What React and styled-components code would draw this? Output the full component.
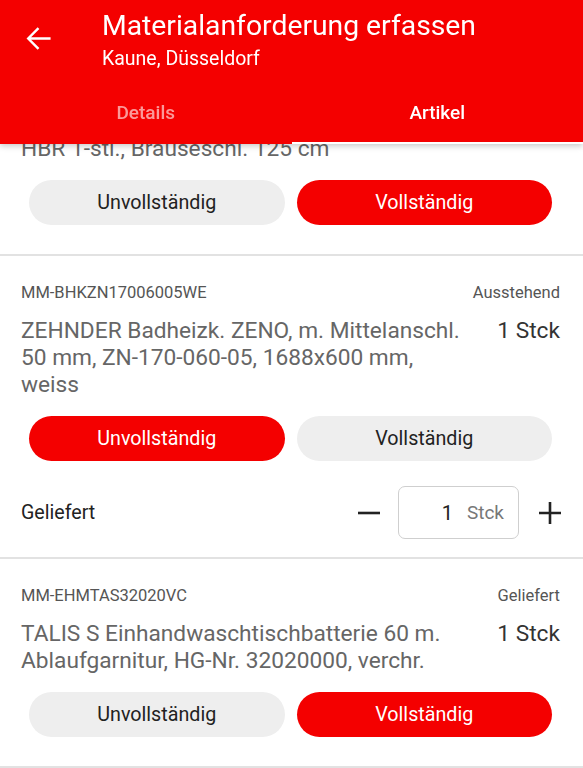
import React, { useState } from "react";
import styled, { createGlobalStyle } from "styled-components";

const RED = "#f40000";

const GlobalStyle = createGlobalStyle`
  html, body {
    margin: 0;
    padding: 0;
    background: #fff;
    font-family: Roboto, "Noto Sans", Arial, sans-serif;
    overflow: hidden;
  }
  * { box-sizing: border-box; }
`;

const items = [
  {
    id: "MM-HGRBR2711600VC",
    status: "Geliefert",
    lines: ["HANSGROHE Brausestange Unica'C 90 cm,", "HBR 1-stl., Brauseschl. 125 cm"],
    qty: "1 Stck",
    state: "complete",
  },
  {
    id: "MM-BHKZN17006005WE",
    status: "Ausstehend",
    lines: ["ZEHNDER Badheizk. ZENO, m. Mittelanschl.", "50 mm, ZN-170-060-05, 1688x600 mm,", "weiss"],
    qty: "1 Stck",
    state: "incomplete",
    delivered: 1,
  },
  {
    id: "MM-EHMTAS32020VC",
    status: "Geliefert",
    lines: ["TALIS S Einhandwaschtischbatterie 60 m.", "Ablaufgarnitur, HG-Nr. 32020000, verchr."],
    qty: "1 Stck",
    state: "complete",
  },
];

function BackIcon() {
  return (
    <svg width="29" height="29" viewBox="0 0 24 24" fill="none" stroke="#fff" strokeWidth="2">
      <path d="M22 12H3.5M12 3.5L3.5 12l8.5 8.5" />
    </svg>
  );
}

function Item({ item }) {
  const [state, setState] = useState(item.state);
  const [count, setCount] = useState(item.delivered || 0);
  const showQty = state === "incomplete";
  return (
    <Card>
      <MetaRow>
        <span>{item.id}</span>
        <span>{item.status}</span>
      </MetaRow>
      <DescRow>
        <Desc>
          {item.lines.map((l) => (
            <span key={l}>{l}</span>
          ))}
        </Desc>
        <Qty>{item.qty}</Qty>
      </DescRow>
      <Buttons $tight={showQty}>
        <Pill $active={state === "incomplete"} onClick={() => setState("incomplete")}>
          Unvollständig
        </Pill>
        <Pill $active={state === "complete"} onClick={() => setState("complete")}>
          Vollständig
        </Pill>
      </Buttons>
      {showQty && (
        <QtyRow>
          <QtyLabel>Geliefert</QtyLabel>
          <Stepper>
            <StepButton onClick={() => setCount(Math.max(0, count - 1))}>
              <svg width="24" height="24" viewBox="0 0 24 24">
                <path d="M1 12h22" stroke="#222" strokeWidth="2.6" />
              </svg>
            </StepButton>
            <QtyBox>
              <QtyValue>{count}</QtyValue>
              <QtyUnit>Stck</QtyUnit>
            </QtyBox>
            <StepButton $plus onClick={() => setCount(count + 1)}>
              <svg width="24" height="24" viewBox="0 0 24 24">
                <path d="M1 12h22M12 1v22" stroke="#222" strokeWidth="2.6" />
              </svg>
            </StepButton>
          </Stepper>
        </QtyRow>
      )}
    </Card>
  );
}

export default function App() {
  const [tab, setTab] = useState("artikel");
  return (
    <>
      <GlobalStyle />
      <Header>
        <Toolbar>
          <BackButton>
            <BackIcon />
          </BackButton>
          <Titles>
            <Title>Materialanforderung erfassen</Title>
            <Subtitle>Kaune, Düsseldorf</Subtitle>
          </Titles>
        </Toolbar>
        <Tabs>
          <Tab $active={tab === "details"} onClick={() => setTab("details")}>
            Details
          </Tab>
          <Tab $active={tab === "artikel"} onClick={() => setTab("artikel")}>
            Artikel
          </Tab>
        </Tabs>
      </Header>
      <List>
        {items.map((it) => (
          <Item key={it.id} item={it} />
        ))}
      </List>
    </>
  );
}

const Header = styled.header`
  position: fixed;
  top: 0;
  left: 0;
  right: 0;
  z-index: 10;
  background: ${RED};
  color: #fff;
  box-shadow: 0 2px 6px rgba(0, 0, 0, 0.22);
`;

const Toolbar = styled.div`
  display: flex;
  height: 90px;
  padding-left: 24px;
`;

const BackButton = styled.div`
  width: 29px;
  height: 29px;
  margin-top: 24px;
  margin-right: 49px;
  display: flex;
`;

const Titles = styled.div`
  display: flex;
  flex-direction: column;
  padding-top: 10px;
`;

const Title = styled.div`
  font-size: 28.3px;
  line-height: 32px;
  white-space: nowrap;
`;

const Subtitle = styled.div`
  font-size: 19.5px;
  line-height: 22px;
  margin-top: 6px;
`;

const Tabs = styled.div`
  display: grid;
  grid-template-columns: 1fr 1fr;
  height: 54px;
`;

const Tab = styled.div`
  display: flex;
  justify-content: center;
  padding-top: 12px;
  font-size: 19px;
  line-height: 22px;
  font-weight: 500;
  color: ${(p) => (p.$active ? "#fff" : "rgba(255,255,255,0.6)")};
  border-bottom: 2px solid ${(p) => (p.$active ? "#fff" : "transparent")};
`;

const List = styled.main`
  padding-top: 47px;
`;

const Card = styled.section`
  padding: 27px 23px 0 21px;
  border-bottom: 2px solid #e2e2e2;
`;

const MetaRow = styled.div`
  display: flex;
  justify-content: space-between;
  font-size: 16.5px;
  line-height: 20px;
  color: #555;
`;

const DescRow = styled.div`
  display: flex;
  justify-content: space-between;
  gap: 20px;
  margin-top: 14px;
`;

const Desc = styled.div`
  display: flex;
  flex-direction: column;
  font-size: 22.7px;
  line-height: 27px;
  color: #666;
  white-space: nowrap;
`;

const Qty = styled.div`
  font-size: 22.7px;
  line-height: 27px;
  color: #333;
  white-space: nowrap;
`;

const Buttons = styled.div`
  display: grid;
  grid-template-columns: 1fr 1fr;
  gap: 12px;
  padding: 0 8px;
  margin-top: 18px;
  margin-bottom: ${(p) => (p.$tight ? "25px" : "29px")};
`;

const Pill = styled.button`
  height: 45px;
  border: none;
  border-radius: 23px;
  font-family: inherit;
  font-size: 19.7px;
  background: ${(p) => (p.$active ? RED : "#eeeeee")};
  color: ${(p) => (p.$active ? "#fff" : "#222")};
  cursor: pointer;
`;

const QtyRow = styled.div`
  display: flex;
  align-items: center;
  justify-content: space-between;
  padding-bottom: 18px;
`;

const QtyLabel = styled.div`
  font-size: 19.6px;
  color: #222;
`;

const Stepper = styled.div`
  display: flex;
  align-items: center;
  gap: 17px;
  margin-right: -2px;
`;

const StepButton = styled.div`
  display: flex;
  margin-left: ${(p) => (p.$plus ? "2px" : "0")};
  cursor: pointer;
`;

const QtyBox = styled.div`
  width: 121px;
  height: 53px;
  border: 1.5px solid #cfcfcf;
  border-radius: 7px;
  display: flex;
  align-items: center;
  justify-content: flex-end;
  gap: 14px;
  padding-right: 14px;
`;

const QtyValue = styled.span`
  font-size: 20px;
  color: #222;
`;

const QtyUnit = styled.span`
  font-size: 19px;
  color: #777;
`;
